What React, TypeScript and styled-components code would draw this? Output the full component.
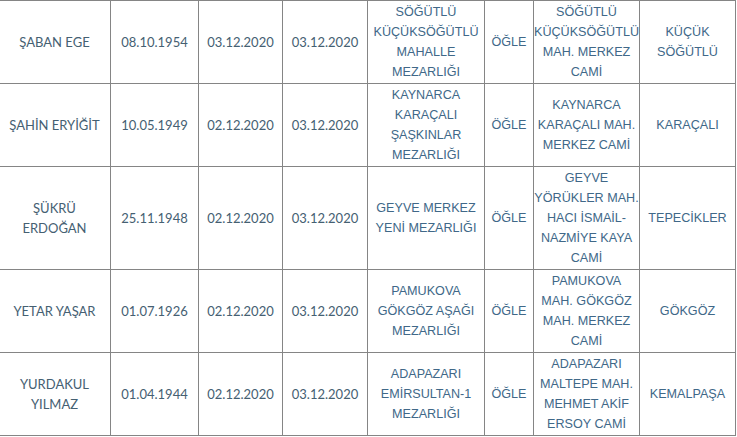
import React from "react";
import styled, { createGlobalStyle } from "styled-components";

const Global = createGlobalStyle`
  html, body { margin: 0; padding: 0; background: #ffffff; }
  body { overflow: hidden; }
`;

const Viewport = styled.div`
  width: 737px;
  height: 437px;
  overflow: hidden;
  background: #ffffff;
`;

const Table = styled.table`
  border-collapse: collapse;
  table-layout: fixed;
  width: 737px;
  margin-left: -2px;
`;

const Cell = styled.td<{ $kind: "person" | "place" }>`
  border: 1px solid #858585;
  text-align: center;
  vertical-align: middle;
  line-height: 20px;
  padding: 1px 0;
  font-size: ${(p) => (p.$kind === "person" ? "13px" : "12.6px")};
  font-family: ${(p) =>
    p.$kind === "person"
      ? 'Lato, "Open Sans", sans-serif'
      : '"Liberation Sans", Arial, sans-serif'};
  color: ${(p) => (p.$kind === "person" ? "#456072" : "#406888")};
`;

const Line = styled.span`
  display: block;
  white-space: nowrap;
`;

type Row = {
  name: string[];
  birth: string;
  death: string;
  burial: string;
  cemetery: string[];
  prayer: string;
  mosque: string[];
  quarter: string[];
};

const rows: Row[] = [
  {
    name: ["ŞABAN EGE"],
    birth: "08.10.1954",
    death: "03.12.2020",
    burial: "03.12.2020",
    cemetery: ["SÖĞÜTLÜ", "KÜÇÜKSÖĞÜTLÜ", "MAHALLE", "MEZARLIĞI"],
    prayer: "ÖĞLE",
    mosque: ["SÖĞÜTLÜ", "KÜÇÜKSÖĞÜTLÜ", "MAH. MERKEZ", "CAMİ"],
    quarter: ["KÜÇÜK", "SÖĞÜTLÜ"],
  },
  {
    name: ["ŞAHİN ERYİĞİT"],
    birth: "10.05.1949",
    death: "02.12.2020",
    burial: "03.12.2020",
    cemetery: ["KAYNARCA", "KARAÇALI", "ŞAŞKINLAR", "MEZARLIĞI"],
    prayer: "ÖĞLE",
    mosque: ["KAYNARCA", "KARAÇALI MAH.", "MERKEZ CAMİ"],
    quarter: ["KARAÇALI"],
  },
  {
    name: ["ŞÜKRÜ", "ERDOĞAN"],
    birth: "25.11.1948",
    death: "02.12.2020",
    burial: "03.12.2020",
    cemetery: ["GEYVE MERKEZ", "YENİ MEZARLIĞI"],
    prayer: "ÖĞLE",
    mosque: ["GEYVE", "YÖRÜKLER MAH.", "HACI İSMAİL-", "NAZMİYE KAYA", "CAMİ"],
    quarter: ["TEPECİKLER"],
  },
  {
    name: ["YETAR YAŞAR"],
    birth: "01.07.1926",
    death: "02.12.2020",
    burial: "03.12.2020",
    cemetery: ["PAMUKOVA", "GÖKGÖZ AŞAĞI", "MEZARLIĞI"],
    prayer: "ÖĞLE",
    mosque: ["PAMUKOVA", "MAH. GÖKGÖZ", "MAH. MERKEZ", "CAMİ"],
    quarter: ["GÖKGÖZ"],
  },
  {
    name: ["YURDAKUL", "YILMAZ"],
    birth: "01.04.1944",
    death: "02.12.2020",
    burial: "03.12.2020",
    cemetery: ["ADAPAZARI", "EMİRSULTAN-1", "MEZARLIĞI"],
    prayer: "ÖĞLE",
    mosque: ["ADAPAZARI", "MALTEPE MAH.", "MEHMET AKİF", "ERSOY CAMİ"],
    quarter: ["KEMALPAŞA"],
  },
];

const widths = [112, 88, 84, 85, 117, 49, 106, 96];

const Lines = ({ lines }: { lines: string[] }) => (
  <>
    {lines.map((l, i) => (
      <Line key={i}>{l}</Line>
    ))}
  </>
);

export default function App() {
  return (
    <Viewport>
      <Global />
      <Table>
        <colgroup>
          {widths.map((w, i) => (
            <col key={i} style={{ width: w }} />
          ))}
        </colgroup>
        <tbody>
          {rows.map((r) => (
            <tr key={r.birth}>
              <Cell $kind="person">
                <Lines lines={r.name} />
              </Cell>
              <Cell $kind="person">{r.birth}</Cell>
              <Cell $kind="person">{r.death}</Cell>
              <Cell $kind="person">{r.burial}</Cell>
              <Cell $kind="place">
                <Lines lines={r.cemetery} />
              </Cell>
              <Cell $kind="place">{r.prayer}</Cell>
              <Cell $kind="place">
                <Lines lines={r.mosque} />
              </Cell>
              <Cell $kind="place">
                <Lines lines={r.quarter} />
              </Cell>
            </tr>
          ))}
        </tbody>
      </Table>
    </Viewport>
  );
}
